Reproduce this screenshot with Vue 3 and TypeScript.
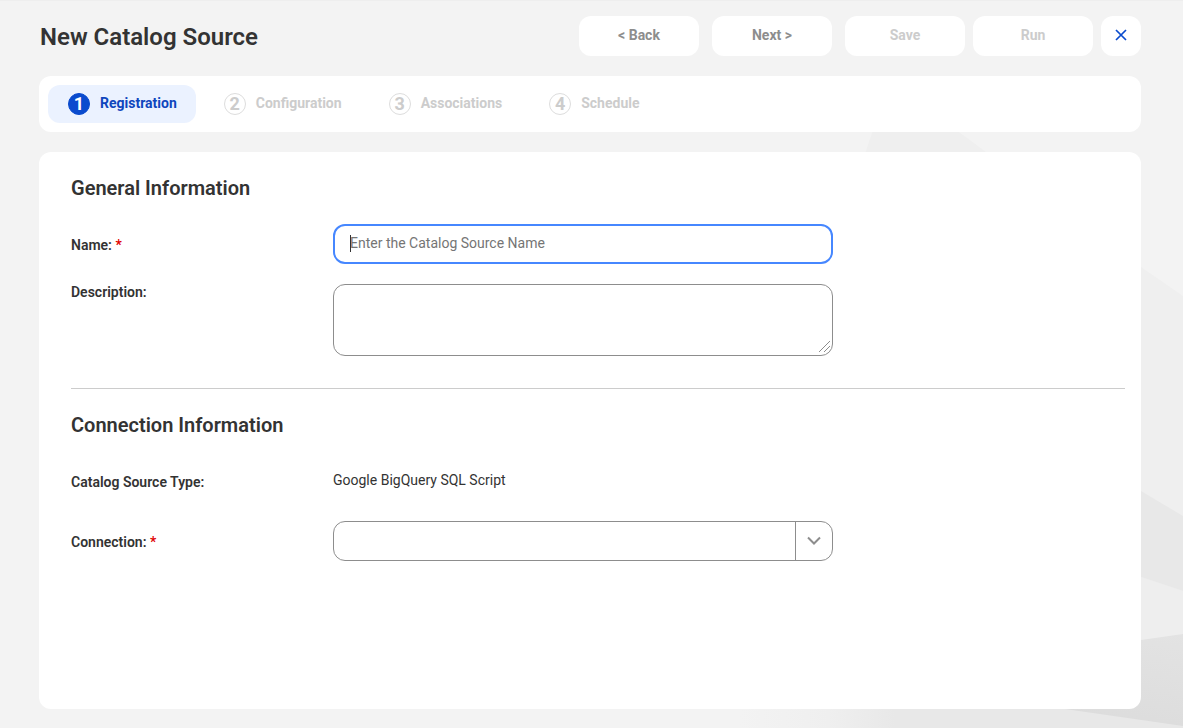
<script setup lang="ts">
import { ref } from 'vue'

interface Step {
  id: number
  label: string
}

const steps: Step[] = [
  { id: 1, label: 'Registration' },
  { id: 2, label: 'Configuration' },
  { id: 3, label: 'Associations' },
  { id: 4, label: 'Schedule' },
]

const activeStep = ref(1)
const name = ref('')
const description = ref('')
const connection = ref('')
</script>

<template>
  <div class="page">
    <svg class="backdrop" viewBox="0 0 1183 728" preserveAspectRatio="xMaxYMax slice" aria-hidden="true">
      <defs>
        <linearGradient id="floor" x1="0" y1="0" x2="1" y2="0">
          <stop offset="0" stop-color="#f3f3f3" />
          <stop offset="0.2" stop-color="#efefef" />
          <stop offset="0.35" stop-color="#e8e8e8" />
          <stop offset="1" stop-color="#e8e8e8" />
        </linearGradient>
        <linearGradient id="slab" x1="1" y1="0" x2="0.6" y2="1">
          <stop offset="0" stop-color="#e3e3e3" />
          <stop offset="1" stop-color="#dcdcdc" />
        </linearGradient>
      </defs>
      <polygon points="890,80 959,132 1141,267 1183,296 1183,640 700,640" fill="#efefef" />
      <polygon points="1000,408 1141,491 1183,516 1183,591 1141,577 1000,530" fill="#e8e8e8" />
      <rect x="740" y="660" width="443" height="68" fill="url(#floor)" />
      <polygon points="1141,577 1183,591 1183,660 1141,660" fill="#eeeeee" />
      <polygon points="1000,660 1141,640 1183,634 1183,726 1065,709" fill="url(#slab)" />
    </svg>

    <header class="header">
      <h1>New Catalog Source</h1>
      <div class="actions">
        <div class="group">
          <button type="button" class="btn">&lt; Back</button>
          <button type="button" class="btn">Next &gt;</button>
          <button type="button" class="btn" disabled>Save</button>
        </div>
        <button type="button" class="btn" disabled>Run</button>
        <button type="button" class="close" aria-label="Close">
          <svg width="12" height="12" viewBox="0 0 12 12" aria-hidden="true">
            <path d="M1 1 L11 11 M11 1 L1 11" stroke="currentColor" stroke-width="1.7" fill="none" />
          </svg>
        </button>
      </div>
    </header>

    <nav class="steps" aria-label="Progress">
      <button
        v-for="step in steps"
        :key="step.id"
        type="button"
        class="step"
        :class="{ active: step.id === activeStep }"
        :disabled="step.id !== activeStep"
      >
        <span class="num">{{ step.id }}</span>
        <span class="step-label">{{ step.label }}</span>
      </button>
    </nav>

    <main class="card">
      <section>
        <h2>General Information</h2>
        <div class="fields">
          <div class="row">
            <label for="name">Name: <span class="req">*</span></label>
            <div class="control">
              <input id="name" v-model="name" type="text" placeholder="Enter the Catalog Source Name" />
              <span class="caret"></span>
            </div>
          </div>
          <div class="row top">
            <label for="description">Description:</label>
            <div class="area">
              <textarea id="description" v-model="description"></textarea>
              <svg class="grip" width="13" height="13" viewBox="0 0 13 13" aria-hidden="true">
                <path d="M1 12 L12 1 M6 12 L12 6" stroke="#8d8d8d" stroke-width="1" fill="none" />
              </svg>
            </div>
          </div>
        </div>
      </section>
      <hr />
      <section>
        <h2>Connection Information</h2>
        <div class="fields">
          <div class="row">
            <span class="label">Catalog Source Type:</span>
            <span class="value">Google BigQuery SQL Script</span>
          </div>
          <div class="row">
            <label for="connection">Connection: <span class="req">*</span></label>
            <div class="control">
              <select id="connection" v-model="connection">
                <option value=""></option>
              </select>
              <span class="arrow">
                <svg width="14" height="10" viewBox="0 0 14 10" aria-hidden="true">
                  <path d="M1 1.5 L7 7.5 L13 1.5" stroke="#8d8d8d" stroke-width="2" fill="none" />
                </svg>
              </span>
            </div>
          </div>
        </div>
      </section>
    </main>
  </div>
</template>

<style>
body {
  margin: 0;
  background: #f3f3f3;
}
</style>

<style scoped>
* {
  box-sizing: border-box;
}
.page {
  position: relative;
  display: flex;
  flex-direction: column;
  gap: 20px;
  min-height: 100vh;
  padding: 15px 42px 19px 39px;
  border-top: 1px solid #eeeeee;
  font-family: Roboto, 'Liberation Sans', sans-serif;
  font-size: 14px;
  color: #333333;
}
.backdrop {
  position: absolute;
  inset: -1px 0 0 0;
  width: 100%;
  height: calc(100% + 1px);
  z-index: -1;
}
button,
input,
textarea,
select {
  font: inherit;
  margin: 0;
}
.header {
  display: flex;
  align-items: center;
  justify-content: space-between;
  height: 40px;
}
h1 {
  margin: 0;
  padding: 2px 0 0 1px;
  font-size: 24px;
  line-height: 38px;
  font-weight: 600;
}
.actions {
  display: flex;
  gap: 8px;
}
.group {
  display: flex;
  gap: 13px;
}
.btn,
.close {
  height: 40px;
  padding: 0 0 2px;
  border: 0;
  border-radius: 12px;
  background: #ffffff;
}
.btn {
  width: 120px;
  font-weight: 700;
  color: #8d8d8d;
}
.btn:disabled {
  color: #cccccc;
}
.close {
  display: flex;
  align-items: center;
  justify-content: center;
  width: 40px;
  color: #0a4bce;
}
.steps {
  display: flex;
  gap: 8px;
  padding: 9px;
  border-radius: 12px;
  background: #ffffff;
}
.step {
  display: flex;
  align-items: center;
  gap: 10px;
  height: 38px;
  padding: 0 19px 0 20px;
  border: 0;
  border-radius: 12px;
  background: transparent;
  font-weight: 700;
  color: #cccccc;
}
.step.active {
  background: #ebf2ff;
  color: #0f46bd;
}
.num {
  width: 22px;
  height: 22px;
  border: 1px solid #dddddd;
  border-radius: 50%;
  font-size: 18px;
  line-height: 20px;
  text-align: center;
}
.active .num {
  border-color: #0a4bce;
  background: #0a4bce;
  color: #ffffff;
}
.step-label {
  padding-bottom: 2px;
}
.card {
  flex: 1;
  padding: 24px 16px 24px 32px;
  border-radius: 12px;
  background: #ffffff;
}
h2 {
  margin: 0 0 24px;
  font-size: 20px;
  line-height: 24px;
  font-weight: 600;
}
.fields {
  display: flex;
  flex-direction: column;
  gap: 20px;
}
.row {
  display: grid;
  grid-template-columns: 262px minmax(0, 500px);
  align-items: center;
  min-height: 40px;
}
.row.top {
  align-items: start;
}
label,
.label {
  padding-top: 2px;
  line-height: 16px;
  font-weight: 600;
}
.top label {
  padding-top: 0;
}
.req {
  color: #e00000;
}
.value {
  padding-bottom: 2px;
  line-height: 18px;
}
.control {
  position: relative;
  height: 40px;
}
.area {
  position: relative;
}
input,
textarea,
select {
  display: block;
  width: 100%;
  border: 1px solid #8d8d8d;
  border-radius: 12px;
  background: #ffffff;
  color: #333333;
  outline: none;
}
input {
  height: 40px;
  padding: 0 15px 2px;
  border: 2px solid #4687ff;
  caret-color: transparent;
}
input::placeholder {
  color: #757575;
}
.caret {
  position: absolute;
  left: 17px;
  top: 11px;
  width: 1px;
  height: 17px;
  background: #333333;
}
textarea {
  height: 72px;
  padding: 8px 15px;
  resize: vertical;
}
textarea::-webkit-resizer {
  background: transparent;
}
.grip {
  position: absolute;
  right: 2px;
  bottom: 3px;
  pointer-events: none;
}
select {
  height: 40px;
  padding: 0 52px 0 15px;
  appearance: none;
}
.arrow {
  position: absolute;
  top: 0;
  right: 0;
  display: flex;
  align-items: center;
  justify-content: center;
  width: 38px;
  height: 40px;
  padding-right: 1px;
  border-left: 1px solid #8d8d8d;
  pointer-events: none;
}
hr {
  height: 1px;
  margin: 32px 0 24px;
  border: 0;
  background: #cccccc;
}
</style>
